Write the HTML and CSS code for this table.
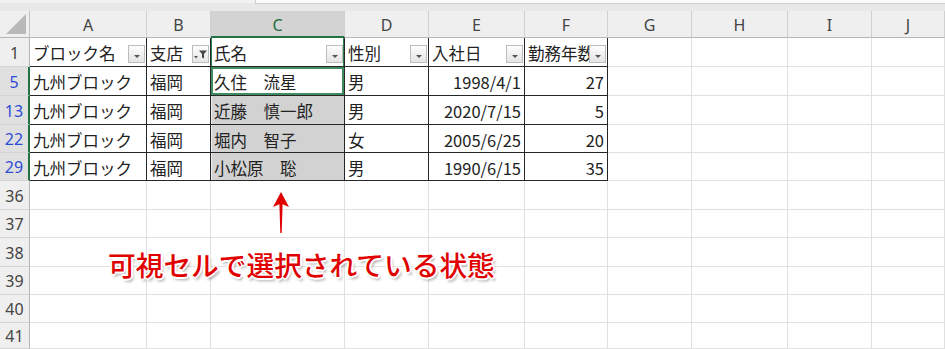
FILE: index.html
```html
<!DOCTYPE html>
<html lang="ja">
<head>
  <meta charset="UTF-8">
  <title>社員名簿</title>
  <link rel="stylesheet" href="styles.css">
</head>
<body>
  <div class="book">
    <!-- edge of the formula bar -->
    <div class="bar-edge"><div class="bar-box"></div></div>

    <div class="sheet">
      <!-- column headers -->
      <div class="corner"><span class="corner-mark"></span></div>
      <div class="col-head">A</div>
      <div class="col-head">B</div>
      <div class="col-head sel">C</div>
      <div class="col-head">D</div>
      <div class="col-head">E</div>
      <div class="col-head">F</div>
      <div class="col-head">G</div>
      <div class="col-head">H</div>
      <div class="col-head">I</div>
      <div class="col-head">J</div>

      <!-- row 1: table header with filter buttons -->
      <div class="row-head">1</div>
      <div class="cell t head">ブロック名<span class="filter"><i class="drop"></i></span></div>
      <div class="cell t head">支店<span class="filter">
        <svg width="15" height="16" viewBox="0 0 15 16"><path d="M1 10h4l-2 2.5z" fill="#555"/><path d="M6 4.5h8l-3 3.6v4.4l-2-1v-3.4z" fill="#444"/></svg>
      </span></div>
      <div class="cell t head c-top">氏名<span class="filter"><i class="drop"></i></span></div>
      <div class="cell t head">性別<span class="filter"><i class="drop"></i></span></div>
      <div class="cell t head">入社日<span class="filter"><i class="drop"></i></span></div>
      <div class="cell t head">勤務年数<span class="filter"><i class="drop"></i></span></div>
      <div class="cell"></div><div class="cell"></div><div class="cell"></div><div class="cell"></div>

      <div class="row-head hit">5</div>
      <div class="cell t">九州ブロック</div>
      <div class="cell t">福岡</div>
      <div class="cell t active">久住　流星</div>
      <div class="cell t">男</div>
      <div class="cell t num">1998/4/1</div>
      <div class="cell t num">27</div>
      <div class="cell"></div><div class="cell"></div><div class="cell"></div><div class="cell"></div>

      <div class="row-head hit">13</div>
      <div class="cell t">九州ブロック</div>
      <div class="cell t">福岡</div>
      <div class="cell t picked">近藤　慎一郎</div>
      <div class="cell t">男</div>
      <div class="cell t num">2020/7/15</div>
      <div class="cell t num">5</div>
      <div class="cell"></div><div class="cell"></div><div class="cell"></div><div class="cell"></div>

      <div class="row-head hit">22</div>
      <div class="cell t">九州ブロック</div>
      <div class="cell t">福岡</div>
      <div class="cell t picked">堀内　智子</div>
      <div class="cell t">女</div>
      <div class="cell t num">2005/6/25</div>
      <div class="cell t num">20</div>
      <div class="cell"></div><div class="cell"></div><div class="cell"></div><div class="cell"></div>

      <div class="row-head hit">29</div>
      <div class="cell t">九州ブロック</div>
      <div class="cell t">福岡</div>
      <div class="cell t picked">小松原　聡</div>
      <div class="cell t">男</div>
      <div class="cell t num">1990/6/15</div>
      <div class="cell t num">35</div>
      <div class="cell"></div><div class="cell"></div><div class="cell"></div><div class="cell"></div>

      <div class="row-head">36</div>
      <div class="cell"></div><div class="cell"></div><div class="cell"></div><div class="cell"></div><div class="cell"></div>
      <div class="cell"></div><div class="cell"></div><div class="cell"></div><div class="cell"></div><div class="cell"></div>

      <div class="row-head">37</div>
      <div class="cell"></div><div class="cell"></div><div class="cell"></div><div class="cell"></div><div class="cell"></div>
      <div class="cell"></div><div class="cell"></div><div class="cell"></div><div class="cell"></div><div class="cell"></div>

      <div class="row-head">38</div>
      <div class="cell"></div><div class="cell"></div><div class="cell"></div><div class="cell"></div><div class="cell"></div>
      <div class="cell"></div><div class="cell"></div><div class="cell"></div><div class="cell"></div><div class="cell"></div>

      <div class="row-head">39</div>
      <div class="cell"></div><div class="cell"></div><div class="cell"></div><div class="cell"></div><div class="cell"></div>
      <div class="cell"></div><div class="cell"></div><div class="cell"></div><div class="cell"></div><div class="cell"></div>

      <div class="row-head">40</div>
      <div class="cell"></div><div class="cell"></div><div class="cell"></div><div class="cell"></div><div class="cell"></div>
      <div class="cell"></div><div class="cell"></div><div class="cell"></div><div class="cell"></div><div class="cell"></div>

      <div class="row-head">41</div>
      <div class="cell"></div><div class="cell"></div><div class="cell"></div><div class="cell"></div><div class="cell"></div>
      <div class="cell"></div><div class="cell"></div><div class="cell"></div><div class="cell"></div><div class="cell"></div>
    </div>

    <!-- callout -->
    <svg class="arrow" width="22" height="46" viewBox="0 0 22 46">
      <path d="M11 2L19 17L12.6 14.2L11.7 43H10.3L9.4 14.2L3 17Z" fill="#e00000"/>
    </svg>
    <div class="note">可視セルで選択されている状態</div>
  </div>
</body>
</html>
```

FILE: styles.css
```css
* {
  margin: 0;
  padding: 0;
  box-sizing: border-box;
}

body {
  width: 945px;
  height: 349px;
  overflow: hidden;
  background: #ffffff;
  font-family: "Noto Sans CJK JP", "Noto Sans", sans-serif;
  color: #222;
}

.book {
  position: relative;
  width: 945px;
  height: 349px;
}

.bar-edge {
  height: 11px;
  background: #e8e8e8;
  border-top: 3px solid #f1f1f1;
}

.bar-box {
  margin: -3px 0 0 255px;
  height: 4px;
  background: #fafafa;
  border-bottom: 1px solid #cfcfcf;
  border-left: 1px solid #cfcfcf;
}

.sheet {
  display: grid;
  grid-template-columns: 30px 117px 64px 134px 84px 96px 83px 84px 96px 84px 1fr;
  grid-template-rows: 27px 29px 29px 29px 28px 28px 29px 28px 29px 28px 28px 1fr;
  height: 338px;
}

/* headers */
.corner {
  position: relative;
  background: #efefef;
  border-right: 1px solid #c4c4c4;
  border-bottom: 1px solid #b6b6b6;
}

.corner-mark {
  position: absolute;
  right: 3px;
  bottom: 3px;
  width: 20px;
  height: 20px;
  background: #b9b9b9;
  clip-path: polygon(100% 0, 100% 100%, 0 100%);
}

.col-head {
  display: flex;
  align-items: center;
  justify-content: center;
  padding-top: 2px;
  background: #efefef;
  border-right: 1px solid #d0d0d0;
  border-bottom: 1px solid #b6b6b6;
  font-family: "Noto Sans", sans-serif;
  font-size: 16px;
  color: #444;
}

.col-head.sel {
  background: #d3d3d3;
  color: #1e6b41;
  border-bottom: 2px solid #217346;
}

.row-head {
  display: flex;
  align-items: center;
  justify-content: center;
  padding-top: 1px;
  background: #efefef;
  border-right: 1px solid #b6b6b6;
  border-bottom: 1px solid #d4d4d4;
  font-family: "Noto Sans", sans-serif;
  font-size: 16px;
  color: #444;
}

.row-head.hit {
  background: #e0e0e0;
  color: #2d4bd6;
  border-right: 2px solid #217346;
}

/* cells */
.cell {
  position: relative;
  display: flex;
  align-items: center;
  padding: 2px 3px 0;
  border-right: 1px solid #e0e0e0;
  border-bottom: 1px solid #e0e0e0;
  font-size: 16.5px;
  white-space: nowrap;
  overflow: hidden;
}

.cell.t {
  border-right-color: #262626;
  border-bottom-color: #262626;
}

.cell.num {
  justify-content: flex-end;
}

.cell.c-top {
  box-shadow: inset 1px 0 0 #2f8052, inset -1px 0 0 #2f8052;
}

.cell.active {
  box-shadow: inset 0 0 0 2px #3e8c5f;
}

.cell.picked {
  background: #d2d2d2;
  box-shadow: inset 1px 0 0 #ececec;
}

.cell.head {
  overflow: visible;
}

/* autofilter drop-down buttons */
.filter {
  position: absolute;
  right: 1px;
  bottom: 3px;
  width: 17px;
  height: 18px;
  display: flex;
  align-items: center;
  justify-content: center;
  border: 1px solid #bdbdbd;
  background: linear-gradient(#fdfdfd, #e4e4e4);
}

.drop {
  margin-top: 4px;
  width: 0;
  height: 0;
  border-left: 3px solid transparent;
  border-right: 3px solid transparent;
  border-top: 3px solid #555;
}

/* callout */
.arrow {
  position: absolute;
  left: 270px;
  top: 190px;
}

.note {
  position: absolute;
  left: 108px;
  top: 248px;
  font-size: 27.7px;
  line-height: 32px;
  font-weight: 500;
  color: #e10000;
  white-space: nowrap;
  text-shadow:
    -1px -1px 0 #fff, 1px -1px 0 #fff, -1px 1px 0 #fff, 1px 1px 0 #fff,
    0 -2px 0 #fff, 0 2px 0 #fff, -2px 0 0 #fff, 2px 0 0 #fff,
    2px 3px 3px rgba(0, 0, 0, 0.35);
}
```
